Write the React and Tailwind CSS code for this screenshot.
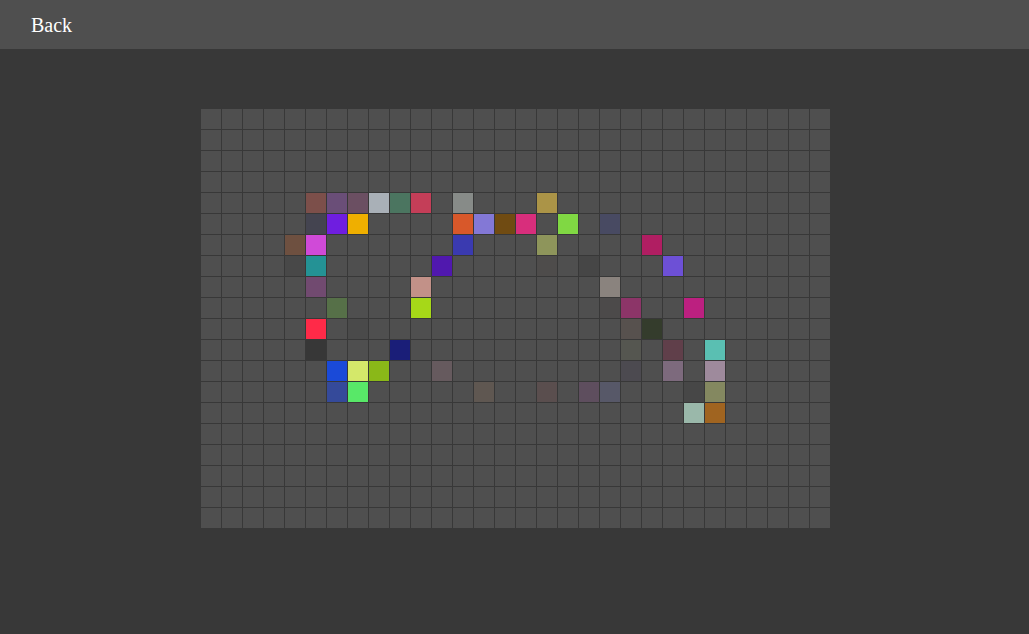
import React from "react";

const COLS = 30;
const ROWS = 20;

// painted cells, keyed by "row,col"
const painted = {
  "4,5": "#7c4f4a",
  "4,6": "#6a4e78",
  "4,7": "#6b4f62",
  "4,8": "#a9b0b7",
  "4,9": "#4b7560",
  "4,10": "#c43e58",
  "4,12": "#878b88",
  "4,16": "#ab9447",
  "5,5": "#444450",
  "5,6": "#6f1ee0",
  "5,7": "#efaf00",
  "5,12": "#d8582a",
  "5,13": "#8378d6",
  "5,14": "#704b12",
  "5,15": "#d82e7c",
  "5,17": "#80d843",
  "5,19": "#484a62",
  "6,4": "#6e5040",
  "6,5": "#d04ad8",
  "6,12": "#3a3ab0",
  "6,16": "#8e955b",
  "6,21": "#b01e62",
  "7,4": "#484848",
  "7,5": "#249295",
  "7,11": "#5018ae",
  "7,16": "#4e4c4b",
  "7,18": "#464646",
  "7,22": "#6d50d6",
  "8,5": "#714a70",
  "8,10": "#c29188",
  "8,19": "#8a837e",
  "9,6": "#567048",
  "9,10": "#a6d818",
  "9,19": "#4c4a4a",
  "9,20": "#8c3568",
  "9,23": "#bc2080",
  "10,5": "#ff2a48",
  "10,7": "#4a4a4a",
  "10,20": "#57514e",
  "10,21": "#343c2c",
  "11,5": "#373737",
  "11,9": "#1a1e78",
  "11,20": "#555650",
  "11,22": "#603f4a",
  "11,24": "#5abfb2",
  "12,6": "#1a4ad8",
  "12,7": "#d4e86a",
  "12,8": "#8ab818",
  "12,11": "#665a5e",
  "12,20": "#4c4a50",
  "12,22": "#7d6a7d",
  "12,24": "#9e8a9c",
  "13,6": "#354a9a",
  "13,7": "#58e868",
  "13,13": "#5f5751",
  "13,16": "#5a4e4e",
  "13,18": "#5e4e5e",
  "13,19": "#575868",
  "13,23": "#474747",
  "13,24": "#848860",
  "14,23": "#9ab8aa",
  "14,24": "#a06420",
};

function Cell({ color }) {
  return (
    <div
      className="w-[20px] h-[20px] bg-[#4f4f4f]"
      style={color ? { backgroundColor: color } : undefined}
    />
  );
}

function App() {
  const cells = [];
  for (let r = 0; r < ROWS; r++) {
    for (let c = 0; c < COLS; c++) {
      cells.push(<Cell key={`${r}-${c}`} color={painted[`${r},${c}`]} />);
    }
  }

  return (
    <div className="min-h-screen bg-[#383838] font-['Liberation_Serif',serif]">
      {/* top bar */}
      <div className="h-[49px] bg-[#4f4f4f] flex items-center px-[31px]">
        <button className="text-[20px] text-white leading-normal">Back</button>
      </div>

      {/* canvas */}
      <div className="flex justify-center pl-[2px] mt-[60px]">
        <div className="grid grid-cols-[repeat(30,20px)] gap-px">{cells}</div>
      </div>
    </div>
  );
}

export default App;
